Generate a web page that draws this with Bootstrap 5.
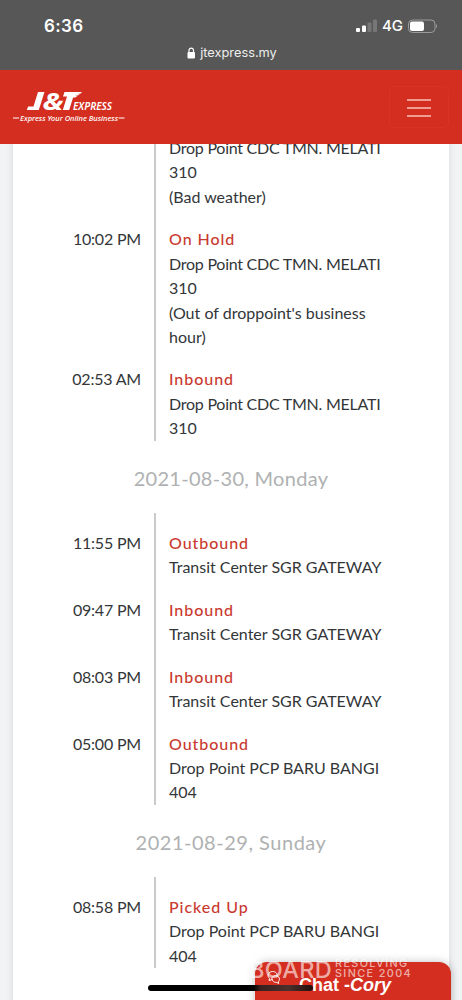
<!DOCTYPE html>
<html lang="en">
<head>
<meta charset="utf-8">
<meta name="viewport" content="width=device-width, initial-scale=1">
<title>J&amp;T Express tracking</title>
<link href="https://cdn.jsdelivr.net/npm/bootstrap@5.3.0/dist/css/bootstrap.min.css" rel="stylesheet">
<style>
body{height:1000px;overflow:hidden;background:#f1f3f5;font-family:"Lato",sans-serif;color:#333638}
.status{height:70px;background:#575757;color:#fff;font-family:"Inter",sans-serif}
.clock{font-size:17px;font-weight:600;line-height:20px;padding-left:44px;width:120px;letter-spacing:.4px}
.net{font-size:15px;font-weight:500;line-height:18px}
.url{font-size:12.8px;line-height:18px;color:#eee;padding-left:2px}
.topbar{height:74px;background:#d42e20;z-index:5;padding:0 18px 0 13px}
.menu-btn{width:60px;height:42px;padding:0;border:1px solid #d63526;border-radius:5px;margin-right:-5px}
.sheet{width:436px;margin:-50.6px auto 0;height:920px;box-shadow:0 0 7px rgba(0,0,0,.12)}
.track{margin-left:141px;border-left:2px solid #cacaca;padding-top:18px;font-size:16px;line-height:24.45px}
.event{margin-bottom:18px}
.event:last-child{margin-bottom:0}
.time{width:100px;margin-left:-115px;margin-right:28px;text-align:right;letter-spacing:-.2px;white-space:nowrap}
.place{white-space:nowrap;letter-spacing:0}
.tight{letter-spacing:-.25px}
.state{color:#c93a30;font-weight:500;letter-spacing:.95px}
.day{height:72px;padding-top:3px;color:#afb1b2;font-size:20px;letter-spacing:.3px}
.day-wide{letter-spacing:.52px}
.chat{left:255px;top:962px;width:196px;height:50px;background:#d42e20;border-radius:12px 12px 0 0;box-shadow:0 0 9px rgba(0,0,0,.25);color:#fff;font:bold 18px/24px "Liberation Sans",sans-serif;padding:11px 0 0 44px;z-index:6}
.stamp{left:232px;top:957px;z-index:7;color:rgba(255,255,255,.62);font-family:"Inter",sans-serif;white-space:nowrap}
.stamp-word{font-size:23.5px;line-height:25px;font-weight:500;width:100px;text-align:right;letter-spacing:.3px}
.stamp-note{font-size:10.8px;line-height:10px;letter-spacing:1.4px;font-weight:500;margin-left:3px;padding-top:2px}
.homebar{left:148px;top:985px;width:165px;height:6px;border-radius:3px;background:linear-gradient(90deg,#000 64%,#37201e 68%,#4b302d 85%,#210f0d);z-index:8}
</style>
</head>
<body>
<div class="status position-relative">
  <div class="d-flex justify-content-between align-items-center pt-3">
    <div class="clock">6:36</div>
    <div class="d-flex align-items-center net">
      <svg width="22" height="14" viewBox="0 0 22 14"><rect y="9" width="4" height="4" rx="1" fill="#fff"/><rect x="6" y="6.500" width="4" height="6.500" rx="1" fill="#fff"/><rect x="11.500" y="3.500" width="4" height="9.500" rx="1" fill="#777"/><rect x="17" y=".5" width="4" height="12.500" rx="1" fill="#777"/></svg>
      <span class="ms-1 me-1">4G</span>
      <svg class="me-4" width="31" height="15" viewBox="0 0 31 15"><rect x="1.500" y="1" width="26.500" height="12.500" rx="4" fill="none" stroke="#9b9b9b"/><rect x="3" y="2.500" width="14" height="9.500" rx="2" fill="#fff"/><path d="M29 5q2 2.200 0 4.500z" fill="#9b9b9b"/></svg>
    </div>
  </div>
  <div class="url d-flex justify-content-center align-items-center mt-2">
    <svg class="me-1" width="9" height="12" viewBox="0 0 9 12"><rect x=".5" y="5" width="7.500" height="6.500" rx="1" fill="#fff"/><path d="M2 5.500V3.300a2.250 2.250 0 0 1 4.500 0v2.200" fill="none" stroke="#fff" stroke-width="1.200"/></svg>
    <span>jtexpress.my</span>
  </div>
</div>
<nav class="topbar position-relative d-flex align-items-center justify-content-between">
  <svg class="overflow-visible" width="114" height="34" viewBox="0 0 114 34" fill="#fff">
    <path d="M25 2h6.500l-5.700 18H13.800l1.300-3.500h5.400z"/>
    <text x="29.500" y="19.800" font-family="Open Sans" font-size="23.500" font-weight="700" font-style="italic" textLength="21" lengthAdjust="spacingAndGlyphs">&amp;</text>
    <path d="M51.500 2H69l-1.700 1.700h-4l3.500.3-2 1.500h-3l2.500.4-2 1.500h-2.200L56.200 20h-6.400l4.200-13.500h-4z"/>
    <text x="60" y="20" font-family="Noto Sans" font-size="10.500" font-weight="600" font-style="italic" textLength="39" lengthAdjust="spacingAndGlyphs">EXPRESS</text>
    <path d="M0 27.500h6v1H0zM105.500 27.500h6v1h-6z"/>
    <text x="7" y="30.500" font-family="Noto Sans" font-size="7.500" font-weight="500" font-style="italic" textLength="98" lengthAdjust="spacingAndGlyphs">Express Your Online Business</text>
  </svg>
  <button class="btn menu-btn" aria-label="Menu"><svg width="26" height="22" viewBox="0 0 26 22"><path d="M1 3h24M1 11h24M1 19h24" stroke="#ef9c91" stroke-width="1.800"/></svg></button>
</nav>
<main class="sheet bg-white">
  <section class="track">
    <div class="event d-flex"><div class="time"></div><div class="place"><div class="state">On Hold</div><span class="tight">Drop Point CDC TMN. MELATI</span><br>310<br>(Bad weather)</div></div>
    <div class="event d-flex"><div class="time">10:02 PM</div><div class="place"><div class="state">On Hold</div><span class="tight">Drop Point CDC TMN. MELATI</span><br>310<br>(Out of droppoint's business<br>hour)</div></div>
    <div class="event d-flex"><div class="time">02:53 AM</div><div class="place"><div class="state">Inbound</div><span class="tight">Drop Point CDC TMN. MELATI</span><br>310</div></div>
  </section>
  <div class="day d-flex justify-content-center align-items-center">2021-08-30, Monday</div>
  <section class="track">
    <div class="event d-flex"><div class="time">11:55 PM</div><div class="place"><div class="state">Outbound</div>Transit Center SGR GATEWAY</div></div>
    <div class="event d-flex"><div class="time">09:47 PM</div><div class="place"><div class="state">Inbound</div>Transit Center SGR GATEWAY</div></div>
    <div class="event d-flex"><div class="time">08:03 PM</div><div class="place"><div class="state">Inbound</div>Transit Center SGR GATEWAY</div></div>
    <div class="event d-flex"><div class="time">05:00 PM</div><div class="place"><div class="state">Outbound</div>Drop Point PCP BARU BANGI<br>404</div></div>
  </section>
  <div class="day day-wide d-flex justify-content-center align-items-center">2021-08-29, Sunday</div>
  <section class="track">
    <div class="event d-flex"><div class="time">08:58 PM</div><div class="place"><div class="state">Picked Up</div>Drop Point PCP BARU BANGI<br>404</div></div>
  </section>
</main>
<div class="chat position-absolute">Chat -<em>Cory</em></div>
<div class="stamp position-absolute d-flex">
  <div class="stamp-word">BOARD</div>
  <div class="stamp-note">RESOLVING<br>SINCE 2004</div>
</div>
<svg class="position-absolute" style="left:266px;top:970px;z-index:7" width="16" height="15" viewBox="0 0 16 15" fill="none" stroke="#fff"><path d="M6.500 9.500 3 10.500l.6-2.200C0 5.500 3 1.500 6.500 1.500S12 4 10.800 6.500"/><path d="M6 7.500c1-2 5-2.500 6.700-.5 1.300 1.600.8 3.500-.3 4.400l.3 2-2.200-1C7.500 12.700 5.500 10 6 7.500z"/></svg>
<div class="homebar position-absolute"></div>
<script src="https://cdn.jsdelivr.net/npm/bootstrap@5.3.0/dist/js/bootstrap.bundle.min.js"></script>
</body>
</html>
